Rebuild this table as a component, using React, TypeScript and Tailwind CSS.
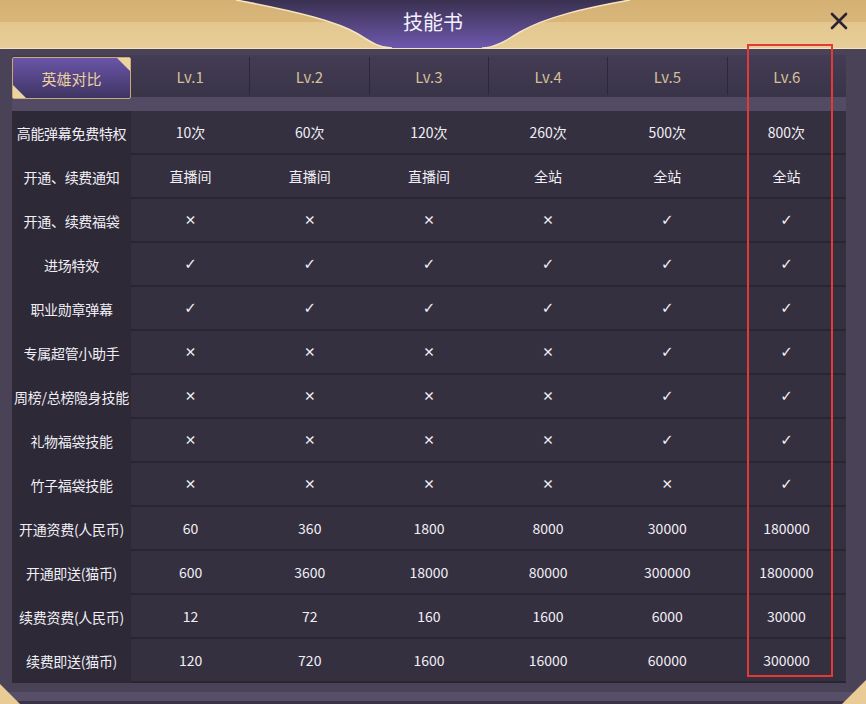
const CHECK = "✓";
const CROSS = "×";

const levels = ["Lv.1", "Lv.2", "Lv.3", "Lv.4", "Lv.5", "Lv.6"];

const rows: [string, string[]][] = [
  ["高能弹幕免费特权", ["10次", "60次", "120次", "260次", "500次", "800次"]],
  ["开通、续费通知", ["直播间", "直播间", "直播间", "全站", "全站", "全站"]],
  ["开通、续费福袋", [CROSS, CROSS, CROSS, CROSS, CHECK, CHECK]],
  ["进场特效", [CHECK, CHECK, CHECK, CHECK, CHECK, CHECK]],
  ["职业勋章弹幕", [CHECK, CHECK, CHECK, CHECK, CHECK, CHECK]],
  ["专属超管小助手", [CROSS, CROSS, CROSS, CROSS, CHECK, CHECK]],
  ["周榜/总榜隐身技能", [CROSS, CROSS, CROSS, CROSS, CHECK, CHECK]],
  ["礼物福袋技能", [CROSS, CROSS, CROSS, CROSS, CHECK, CHECK]],
  ["竹子福袋技能", [CROSS, CROSS, CROSS, CROSS, CROSS, CHECK]],
  ["开通资费(人民币)", ["60", "360", "1800", "8000", "30000", "180000"]],
  ["开通即送(猫币)", ["600", "3600", "18000", "80000", "300000", "1800000"]],
  ["续费资费(人民币)", ["12", "72", "160", "1600", "6000", "30000"]],
  ["续费即送(猫币)", ["120", "720", "1600", "16000", "60000", "300000"]],
];

function Cell({ value }: { value: string }) {
  if (value === CROSS) {
    return <span className="text-[12px] font-bold leading-none">×</span>;
  }
  if (value === CHECK) {
    return <span className="text-[15px] leading-none font-['DejaVu_Sans',sans-serif]">✓</span>;
  }
  return <span>{value}</span>;
}

function HeaderArt() {
  // 헤더 가운데 보라색 장식
  return (
    <svg className="absolute inset-0" width="866" height="48" viewBox="0 0 866 48">
      <defs>
        <linearGradient id="pur" x1="0" y1="0" x2="0" y2="1">
          <stop offset="0" stopColor="#3a3150" />
          <stop offset="1" stopColor="#6d58ad" />
        </linearGradient>
      </defs>
      <path
        d="M236,0 C300,12 338,22 358,34 C372,43 380,48 392,48 L482,48 C494,48 504,42 520,32 C546,17 585,8 630,0 Z"
        fill="url(#pur)"
      />
      <path
        d="M236,0 C300,12 338,22 358,34 C372,43 380,48 392,48"
        fill="none"
        stroke="#f6e6bf"
        strokeWidth="1.5"
      />
      <path
        d="M482,48 C494,48 504,42 520,32 C546,17 585,8 630,0"
        fill="none"
        stroke="#f6e6bf"
        strokeWidth="1.5"
      />
    </svg>
  );
}

export default function App() {
  return (
    <div className="relative w-[866px] h-[704px] overflow-hidden bg-[#4a4358] font-['Noto_Sans_CJK_SC',sans-serif] text-[14px] text-[#f1eff6]">
      {/* header */}
      <div className="relative h-[48px] bg-[linear-gradient(180deg,#d5b073_0%,#d8b67a_45%,#e3c78f_47%,#e7cd98_100%)]">
        <HeaderArt />
        <div className="relative flex h-full items-center justify-center pb-[4px] text-[20px] text-[#f5f0ff]">
          技能书
        </div>
        <svg className="absolute right-[18px] top-[12px]" width="18" height="18" viewBox="0 0 18 18">
          <path d="M2,2 L16,16 M16,2 L2,16" stroke="#2a2432" strokeWidth="2.6" strokeLinecap="round" />
        </svg>
      </div>
      <div className="h-[1px] bg-[#f4e4bd]" />

      <div className="w-[834px] ml-[12px] pt-[6px]">
        {/* tabs */}
        <div className="flex h-[42px] bg-[linear-gradient(180deg,#433c54,#3a3449)]">
          <div className="relative z-10 -mb-[2px] mt-[2px] flex w-[119px] shrink-0 items-center justify-center rounded-[2px] border border-[#c9a978] bg-[linear-gradient(180deg,#6a55a8,#3f3563)] pt-[2px] text-[15px] text-[#ecd09a]">
            英雄对比
            <span className="absolute right-0 top-0 h-0 w-0 border-l-[13px] border-t-[13px] border-l-transparent border-t-[#ecd3a1]" />
            <span className="absolute bottom-0 left-0 h-0 w-0 border-b-[13px] border-r-[13px] border-b-[#ecd3a1] border-r-transparent" />
          </div>
          {levels.map((lv, i) => (
            <div
              key={lv}
              className={`flex flex-1 items-center justify-center pt-[3px] text-[15px] text-[#d6c195] ${
                i > 0 ? "my-[2px] border-l border-[#2d2839]" : ""
              }`}
            >
              {lv}
            </div>
          ))}
        </div>
        <div className="h-[14px] bg-[#524b63]" />

        {/* table */}
        <div className="flex">
          <div className="w-[119px] shrink-0 bg-[#2d2936]">
            {rows.map(([label]) => (
              <div key={label} className="flex h-[44px] items-center justify-center whitespace-nowrap tracking-[-0.3px]">
                {label}
              </div>
            ))}
          </div>
          <div className="flex-1 bg-[#35303f]">
            {rows.map(([label, vals]) => (
              <div key={label} className="flex h-[44px] border-b-2 border-[#2a2631]">
                {vals.map((v, i) => (
                  <div key={i} className="flex flex-1 items-center justify-center">
                    <Cell value={v} />
                  </div>
                ))}
              </div>
            ))}
          </div>
        </div>
      </div>

      {/* bottom frame */}
      <div className="absolute bottom-0 left-0 right-0 h-[12px] border-b-[3px] border-[#3b3448] bg-[#574f67]" />
      <svg className="absolute bottom-0 left-0" width="22" height="22" viewBox="0 0 22 22">
        <path d="M0,2 L20,22 L0,22 Z" fill="#e9cc95" />
      </svg>
      <svg className="absolute bottom-0 right-0" width="24" height="24" viewBox="0 0 24 24">
        <path d="M24,0 L0,24 L24,24 Z" fill="#e9cc95" />
      </svg>

      {/* 강조 표시 */}
      <div className="absolute left-[747px] top-[44px] h-[633px] w-[86px] border-2 border-[#e53935]" />
    </div>
  );
}
